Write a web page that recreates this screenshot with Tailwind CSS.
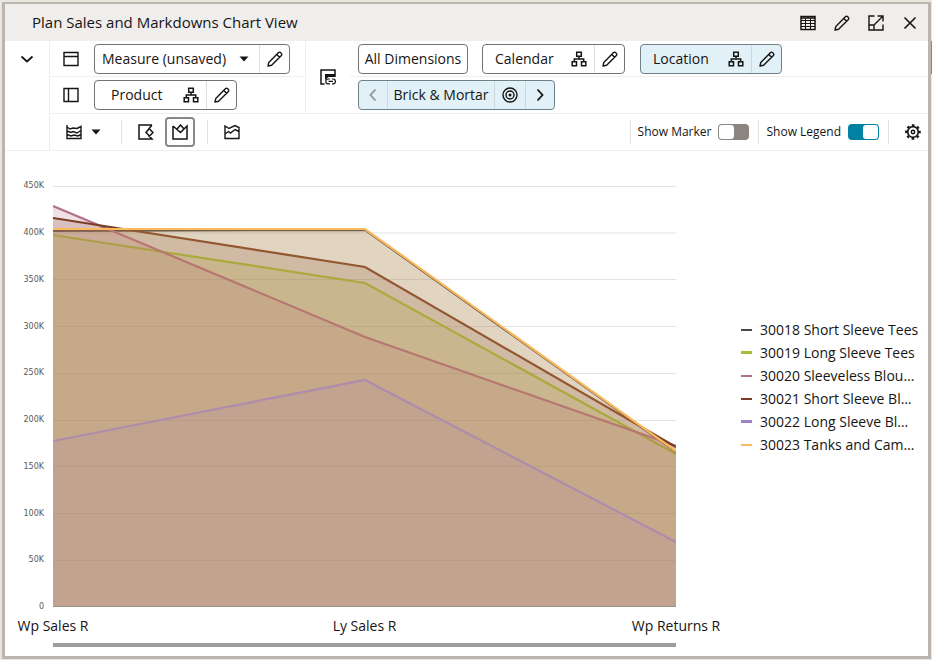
<!DOCTYPE html>
<html lang="en">

<head>
    <meta charset="UTF-8">
    <meta name="viewport" content="width=device-width, initial-scale=1.0">

    <title>Plan Sales and Markdowns Chart View</title>

    <!-- Import TailWindCSS -->
    <script src="https://cdn.jsdelivr.net/npm/@tailwindcss/browser@4"></script>
</head>

<body class="min-h-screen bg-[#e9e6e0] font-['Open_Sans','Noto_Sans',sans-serif] text-sm text-[#161513]">

    <!-- Icons used more than once -->
    <svg class="hidden" xmlns="http://www.w3.org/2000/svg">
        <symbol id="pencil" viewBox="0 0 16 16">
            <path d="M1 15l.8-3.6L11.6 1.6a1.3 1.3 0 0 1 1.9 0l.9.9a1.3 1.3 0 0 1 0 1.9L4.6 14.2 1 15zM9.8 3.4l2.8 2.8"
                fill="none" stroke="currentColor" stroke-width="1.4" stroke-linejoin="round" />
        </symbol>
        <symbol id="tree" viewBox="0 0 16 16">
            <path d="M5.7 1.2h4.6v4.1H5.7zM1.2 10.7h4.3v4.1H1.2zM10.5 10.7h4.3v4.1h-4.3zM8 5.3V8M3.3 10.7V8h9.4v2.7"
                fill="none" stroke="currentColor" stroke-width="1.5" />
        </symbol>
        <symbol id="caret" viewBox="0 0 10 6">
            <path d="M.5.5h9L5 5.5z" fill="currentColor" />
        </symbol>
        <symbol id="chevron" viewBox="0 0 8 14">
            <path d="M1.5 1.5L6.5 7l-5 5.5" fill="none" stroke="currentColor" stroke-width="1.8" />
        </symbol>
    </svg>

    <div class="relative pt-0.5 pr-px pb-px pl-0.5">
        <!-- Page scroll thumb -->
        <div class="absolute top-[41px] right-0 h-[33px] w-px bg-[#8b8580]"></div>

        <main class="border-3 border-t-2 border-[#bbb5ae] bg-white">

            <!-- Title bar -->
            <header class="flex h-[37px] items-center bg-[#f0eeec] pr-2.5 pl-[27px]">
                <h1 class="flex-1 text-[15px] font-medium">Plan Sales and Markdowns Chart View</h1>
                <div class="flex items-center gap-[18px]">
                    <button aria-label="Table view">
                        <svg class="size-4" viewBox="0 0 16 16" fill="none" stroke="currentColor">
                            <path d="M1 1.5h14v13H1z" stroke-width="1.5" />
                            <path d="M1 3h14" stroke-width="1.6" />
                            <path d="M1 5.5h14M1 8.5h14M1 11.5h14M5.5 4v11M10.5 4v11" stroke-width="1" />
                        </svg>
                    </button>
                    <button aria-label="Edit"><svg class="size-4"><use href="#pencil" /></svg></button>
                    <button aria-label="Maximize">
                        <svg class="size-4" viewBox="0 0 16 16" fill="none" stroke="currentColor" stroke-width="1.4">
                            <path d="M6.5 1H1v14h14V9.5M9.5 1H15v5.5M15 1L6 10M1 10h5v5" />
                        </svg>
                    </button>
                    <button aria-label="Close">
                        <svg class="size-4" viewBox="0 0 16 16" fill="none" stroke="currentColor" stroke-width="1.6">
                            <path d="M2.5 2.5l11 11M13.5 2.5l-11 11" />
                        </svg>
                    </button>
                </div>
            </header>

            <section class="flex border-b border-[#f0efed]">
                <div class="flex w-[45px] shrink-0 justify-center border-r border-[#f0efed] pt-3">
                    <button aria-label="Collapse" class="flex size-3 items-center justify-center">
                        <svg class="h-3.5 w-2 rotate-90"><use href="#chevron" /></svg>
                    </button>
                </div>

                <div class="flex-1">
                    <div class="flex border-b border-[#f0efed]">
                        <!-- Column and row axes -->
                        <div class="w-64 shrink-0 border-r border-[#f0efed]">
                            <div class="flex h-9 items-center gap-[15px] border-b border-[#f0efed] pl-[13px]">
                                <svg class="size-4" viewBox="0 0 16 16" fill="none" stroke="currentColor" stroke-width="1.4">
                                    <path d="M1 1.5h14v13H1zM1 5.5h14" />
                                </svg>
                                <div class="flex h-[30px] w-49 items-center rounded border border-[#77726d]">
                                    <div class="relative flex h-full flex-1 items-center">
                                        <select aria-label="Measure"
                                            class="h-full w-full appearance-none bg-transparent pl-[7px] font-medium">
                                            <option>Measure (unsaved)</option>
                                        </select>
                                        <svg class="pointer-events-none absolute right-2.5 h-1.5 w-2.5"><use href="#caret" /></svg>
                                    </div>
                                    <button aria-label="Edit measure"
                                        class="flex h-full w-[30px] items-center justify-center border-l border-[#e0dedb]">
                                        <svg class="size-4"><use href="#pencil" /></svg>
                                    </button>
                                </div>
                            </div>
                            <div class="flex h-9 items-center gap-[15px] pl-[13px]">
                                <svg class="size-4" viewBox="0 0 16 16" fill="none" stroke="currentColor" stroke-width="1.4">
                                    <path d="M1 1.5h14v13H1zM5.5 1.5v13" />
                                </svg>
                                <div class="flex h-[30px] w-[143px] items-center rounded border border-[#77726d]">
                                    <button class="flex h-full flex-1 items-center justify-between pr-[7px] pl-4 font-medium">
                                        Product
                                        <svg class="size-4"><use href="#tree" /></svg>
                                    </button>
                                    <button aria-label="Edit product"
                                        class="flex h-full w-[30px] items-center justify-center border-l border-[#e0dedb]">
                                        <svg class="size-4"><use href="#pencil" /></svg>
                                    </button>
                                </div>
                            </div>
                        </div>

                        <!-- Page axis -->
                        <div class="flex w-11 shrink-0 items-center justify-center">
                            <svg class="size-4" viewBox="0 0 16 16" fill="none" stroke="currentColor">
                                <path d="M4.5 15H1V1h14v7" stroke-width="1.5" />
                                <path d="M5 5h10v3H8.500L5 11z" fill="currentColor" stroke="none" />
                                <path d="M10 10H8.200a2.200 2.200 0 0 0 0 4.800H10M12 10h1a2.200 2.200 0 0 1 0 4.800h-1M8.500 12.400h4.500" stroke-width="1.2" />
                            </svg>
                        </div>
                        <div class="flex-1">
                            <div class="flex h-9 items-center border-b border-[#f0efed] pl-2">
                                <button class="mr-3.5 h-[30px] w-[110px] rounded border border-[#77726d] font-medium whitespace-nowrap">All Dimensions</button>
                                <div class="mr-[15px] flex h-[30px] w-[143px] items-center rounded border border-[#77726d]">
                                    <button class="flex h-full flex-1 items-center justify-between pr-[7px] pl-3 font-medium">
                                        Calendar
                                        <svg class="size-4"><use href="#tree" /></svg>
                                    </button>
                                    <button aria-label="Edit calendar"
                                        class="flex h-full w-[30px] items-center justify-center border-l border-[#e0dedb]">
                                        <svg class="size-4"><use href="#pencil" /></svg>
                                    </button>
                                </div>
                                <div class="flex h-[30px] w-[142px] items-center rounded border border-[#6f8188] bg-[#e1f1f7]">
                                    <button class="flex h-full flex-1 items-center justify-between pr-[7px] pl-3 font-medium">
                                        Location
                                        <svg class="size-4"><use href="#tree" /></svg>
                                    </button>
                                    <button aria-label="Edit location"
                                        class="flex h-full w-[30px] items-center justify-center border-l border-[#cbd8dc]">
                                        <svg class="size-4"><use href="#pencil" /></svg>
                                    </button>
                                </div>
                            </div>
                            <div class="flex h-9 items-center pl-2">
                                <div class="flex h-[30px] w-[197px] items-center rounded border border-[#6f8188] bg-[#e1f1f7]">
                                    <button aria-label="Previous" disabled class="flex h-full w-7 items-center justify-center text-[#8b9599]">
                                        <svg class="h-3.5 w-2 rotate-180"><use href="#chevron" /></svg>
                                    </button>
                                    <button class="h-full flex-1 border-x border-[#cbd8dc] font-medium whitespace-nowrap">Brick &amp; Mortar</button>
                                    <button aria-label="Target" class="flex h-full w-[30px] items-center justify-center">
                                        <svg class="size-4" viewBox="0 0 16 16" fill="none" stroke="currentColor" stroke-width="1.4">
                                            <circle cx="8" cy="8" r="7" />
                                            <circle cx="8" cy="8" r="4" />
                                            <circle cx="8" cy="8" r="1.5" fill="currentColor" stroke="none" />
                                        </svg>
                                    </button>
                                    <button aria-label="Next" class="flex h-full w-[29px] items-center justify-center border-l border-[#cbd8dc]">
                                        <svg class="h-3.5 w-2"><use href="#chevron" /></svg>
                                    </button>
                                </div>
                            </div>
                        </div>
                    </div>

                    <!-- Chart options -->
                    <div class="flex h-9 items-center pl-4">
                        <button aria-label="Chart type" class="flex items-center gap-[9px]">
                            <svg class="size-4" viewBox="0 0 16 16" fill="none" stroke="currentColor" stroke-width="1.4">
                                <path d="M1 1v13.5h14V2.5L11 4.5 7 4 4 5 1 3M1 7l4 1.5 2-1 4 1.5 4-2.5M1 10.5l4 1.5 3-1 4 1 3-1.5" />
                            </svg>
                            <svg class="h-1.5 w-2.5"><use href="#caret" /></svg>
                        </button>
                        <span class="ml-5 h-6 w-px bg-[#e4e2df]"></span>
                        <button aria-label="Horizontal" class="ml-4">
                            <svg class="size-4" viewBox="0 0 16 16" fill="none" stroke="currentColor" stroke-width="1.5">
                                <path d="M14 1H1v14h13l-3.5-3.5M14 1L8 8.5l3.5 3.5L15 8.5 11.5 5" />
                            </svg>
                        </button>
                        <button aria-label="Vertical" aria-pressed="true"
                            class="ml-[11px] flex size-[30px] items-center justify-center rounded border-2 border-[#8b8784]">
                            <svg class="size-4 shrink-0" viewBox="0 0 16 16" fill="none" stroke="currentColor" stroke-width="1.5">
                                <path d="M1 2v13h14V2l-3.5 3.5M1 2l7.5 6.5L12 5 8.5 1 5 5" />
                            </svg>
                        </button>
                        <span class="ml-3 h-6 w-px bg-[#e4e2df]"></span>
                        <button aria-label="Stacking" class="ml-4">
                            <svg class="size-4" viewBox="0 0 16 16" fill="none" stroke="currentColor" stroke-width="1.4">
                                <path d="M1 2v12.5h14V3.5L11 1.5 5 4.5zM1 10l3.5-2.5L6.5 9 11 5.5l4 2" />
                            </svg>
                        </button>

                        <div class="ml-auto flex items-center text-xs font-medium">
                            <span class="mr-[7px] h-6 w-px bg-[#e4e2df]"></span>
                            <label for="marker">Show Marker</label>
                            <input id="marker" type="checkbox" role="switch"
                                class="ml-[7px] h-4 w-[31px] appearance-none rounded bg-[#8b8580] p-px before:block before:h-3.5 before:w-[15px] before:rounded-[3px] before:bg-white checked:bg-[#0281a3] checked:before:ml-3.5">
                            <span class="mr-[7px] ml-[9px] h-6 w-px bg-[#e4e2df]"></span>
                            <label for="legend">Show Legend</label>
                            <input id="legend" type="checkbox" role="switch" checked
                                class="ml-[7px] h-4 w-[31px] appearance-none rounded bg-[#8b8580] p-px before:block before:h-3.5 before:w-[15px] before:rounded-[3px] before:bg-white checked:bg-[#0281a3] checked:before:ml-3.5">
                            <span class="ml-[9px] h-6 w-px bg-[#e4e2df]"></span>
                            <button aria-label="Settings" class="mr-[7px] ml-4">
                                <svg class="size-4" viewBox="0 0 16 16" fill="none" stroke="currentColor">
                                    <circle cx="8" cy="8" r="5.3" stroke-width="1.7" />
                                    <circle cx="8" cy="8" r="6.8" stroke-width="2" stroke-dasharray="2.67 2.67" stroke-dashoffset="1.335" />
                                    <circle cx="8" cy="8" r="1.7" stroke-width="1.5" />
                                </svg>
                            </button>
                        </div>
                    </div>
                </div>
            </section>

            <!-- Chart -->
            <section class="flex pt-[35px] pb-[9px]">
                <div class="flex h-[421px] w-12 shrink-0 flex-col justify-between pr-[9px] text-right font-['DejaVu_Sans',sans-serif] text-[8px] text-[#5c5854]">
                    <span class="flex h-0 items-center justify-end">450K</span>
                    <span class="flex h-0 items-center justify-end">400K</span>
                    <span class="flex h-0 items-center justify-end">350K</span>
                    <span class="flex h-0 items-center justify-end">300K</span>
                    <span class="flex h-0 items-center justify-end">250K</span>
                    <span class="flex h-0 items-center justify-end">200K</span>
                    <span class="flex h-0 items-center justify-end">150K</span>
                    <span class="flex h-0 items-center justify-end">100K</span>
                    <span class="flex h-0 items-center justify-end">50K</span>
                    <span class="flex h-0 items-center justify-end">0</span>
                </div>

                <div class="flex-1">
                    <svg class="block h-[421px] w-full" viewBox="0 0 623 421" preserveAspectRatio="none" fill="none">
                        <path stroke="#e3e3e3" d="M0 .5h623M0 47h623M0 93.5h623M0 140.5h623M0 187.5h623M0 234.5h623M0 280.5h623M0 327.5h623M0 374.5h623" />
                        <path fill="#4f4846" fill-opacity=".2" d="M0 45L312 44 623 266V421H0z" />
                        <path stroke="#4f4446" stroke-width="2" d="M0 45L312 44 623 266" />
                        <path fill="#a2bf39" fill-opacity=".2" d="M0 49L312 97 623 268V421H0z" />
                        <path stroke="#a2bf39" stroke-width="2.2" d="M0 49L312 97 623 268" />
                        <path fill="#b5708a" fill-opacity=".2" d="M0 20L312 151 623 260V421H0z" />
                        <path stroke="#b5708a" stroke-width="2.2" d="M0 20L312 151 623 260" />
                        <path fill="#7a3e26" fill-opacity=".2" d="M0 32L312 81 623 261V421H0z" />
                        <path stroke="#7a3e26" stroke-width="2.2" d="M0 32L312 81 623 261" />
                        <path fill="#9f80c1" fill-opacity=".2" d="M0 255L312 194 623 356V421H0z" />
                        <path stroke="#9f80c1" stroke-width="2.2" d="M0 255L312 194 623 356" />
                        <path fill="#f5bd5a" fill-opacity=".2" d="M0 43H312L623 265V421H0z" />
                        <path stroke="#fbb95c" stroke-width="2.2" d="M0 43H312L623 265" />
                        <path stroke="#9e9589" d="M0 420.5h623" />
                    </svg>
                    <div class="mt-[9px] flex h-5 items-center justify-between">
                        <span class="flex w-0 justify-center whitespace-nowrap">Wp Sales R</span>
                        <span class="flex w-0 justify-center whitespace-nowrap">Ly Sales R</span>
                        <span class="flex w-0 justify-center whitespace-nowrap">Wp Returns R</span>
                    </div>
                    <div class="mt-[7px] h-1 bg-[#9e9e9e]"></div>
                </div>

                <ul class="mr-3 ml-[65px] flex h-[402px] w-[175px] shrink-0 flex-col justify-center whitespace-nowrap">
                    <li class="flex h-[23px] items-center gap-2"><span class="h-0.5 w-[11px] shrink-0 bg-[#4f4446]"></span>30018 Short Sleeve Tees</li>
                    <li class="flex h-[23px] items-center gap-2"><span class="h-[3px] w-[11px] shrink-0 bg-[#a2bf39]"></span>30019 Long Sleeve Tees</li>
                    <li class="flex h-[23px] items-center gap-2"><span class="h-0.5 w-[11px] shrink-0 bg-[#b5708a]"></span>30020 Sleeveless Blou…</li>
                    <li class="flex h-[23px] items-center gap-2"><span class="h-0.5 w-[11px] shrink-0 bg-[#7a3e26]"></span>30021 Short Sleeve Bl…</li>
                    <li class="flex h-[23px] items-center gap-2"><span class="h-[3px] w-[11px] shrink-0 bg-[#9f80c1]"></span>30022 Long Sleeve Bl…</li>
                    <li class="flex h-[23px] items-center gap-2"><span class="h-0.5 w-[11px] shrink-0 bg-[#fbb95c]"></span>30023 Tanks and Cam…</li>
                </ul>
            </section>
        </main>
    </div>
</body>

</html>
